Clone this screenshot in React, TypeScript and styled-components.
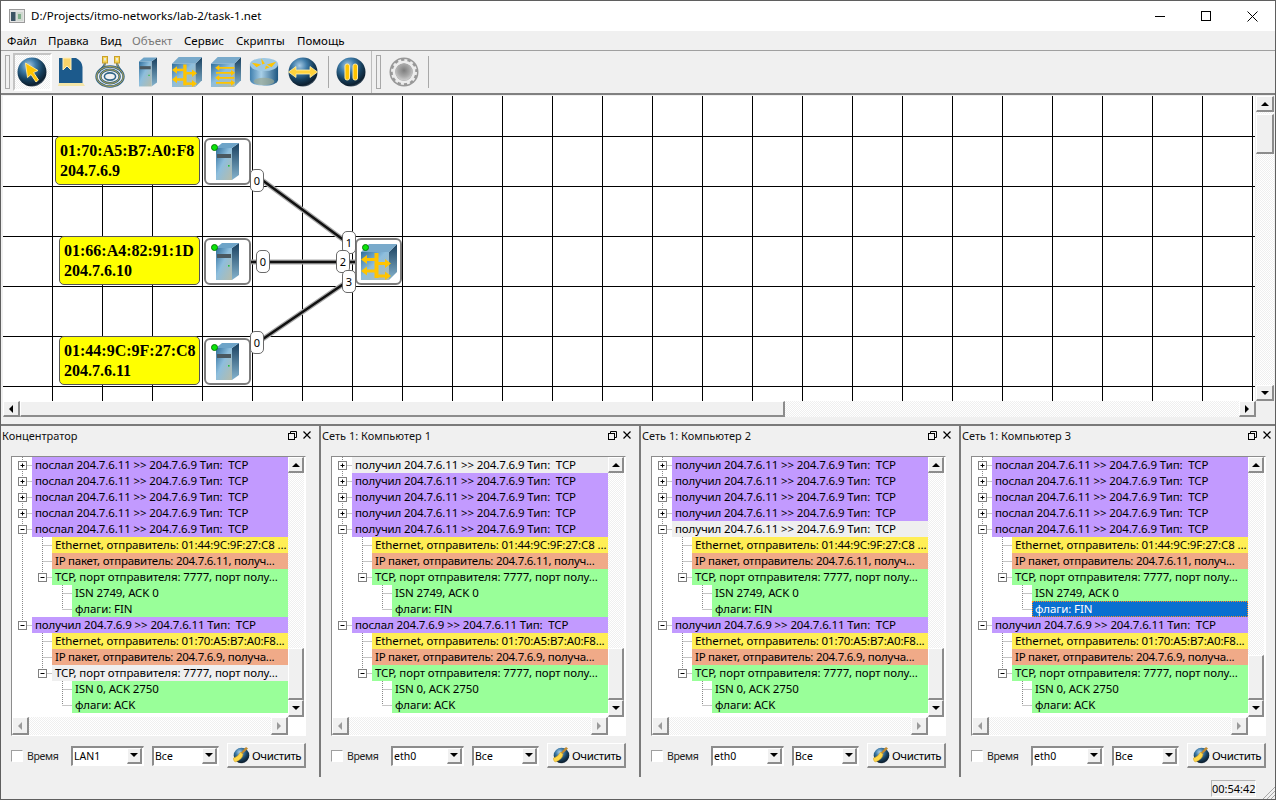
import React from 'react';
import styled, { createGlobalStyle, css } from 'styled-components';

const Global = createGlobalStyle`
  html, body { margin: 0; padding: 0; background: #f0f0f0; }
  * { box-sizing: border-box; }
`;

const uiFont = `"Noto Sans", "Open Sans", sans-serif`;
const checker = css`
  background: repeating-conic-gradient(#ffffff 0 25%, #efefef 0 50%) 0 0 / 2px 2px;
`;
const raised = css`
  background: #f0f0f0;
  border-style: solid;
  border-width: 1px 2px 2px 1px;
  border-color: #ffffff #8c8c8c #8c8c8c #ffffff;
`;
const sunken = css`
  border-style: solid;
  border-width: 2px 1px 1px 2px;
  border-color: #8c8c8c #ffffff #ffffff #8c8c8c;
`;

const Win = styled.div`
  width: 1276px;
  height: 800px;
  border: 1px solid #5f5f5f;
  background: #f0f0f0;
  display: flex;
  flex-direction: column;
  overflow: hidden;
  font-family: ${uiFont};
  font-size: 12px;
  color: #000;
`;
const TitleBar = styled.div`
  height: 30px;
  flex: none;
  background: #fff;
  display: flex;
  align-items: center;
  padding-left: 8px;
  gap: 6px;
`;
const TitleText = styled.span`
  flex: 1;
  font-size: 11.5px;
  padding-bottom: 2px;
`;
const WinButtons = styled.div`
  display: flex;
  align-items: center;
  height: 100%;
`;
const WinButton = styled.div`
  width: 46px;
  height: 100%;
  display: flex;
  align-items: center;
  justify-content: center;
`;
const MenuBar = styled.div`
  height: 20px;
  flex: none;
  display: flex;
  align-items: center;
  border-bottom: 1px solid #a0a0a0;
  font-size: 11.5px;
`;
const MenuItem = styled.span<{ $w: number; $off?: boolean }>`
  width: ${p => p.$w}px;
  padding-left: 6px;
  white-space: nowrap;
  color: ${p => (p.$off ? '#787878' : '#000')};
`;
const Toolbar = styled.div`
  height: 42px;
  flex: none;
  display: flex;
  align-items: center;
  padding-left: 4px;
`;
const Grip = styled.div`
  width: 5px;
  height: 34px;
  margin-right: 3px;
  ${raised};
  border-width: 1px;
  border-color: #a8a8a8;
`;
const ToolButton = styled.div<{ $on?: boolean }>`
  width: 38.7px;
  height: 38px;
  flex: none;
  display: flex;
  align-items: center;
  justify-content: center;
  ${p => p.$on && css`
    ${checker};
    border: 2px solid #c4c4c4;
    border-right-color: #fff;
    border-bottom-color: #fff;
  `}
`;
const ToolSep = styled.div`
  width: 1px;
  height: 32px;
  background: #a8a8a8;
  margin: 0 3px 0 5px;
  flex: none;
`;
const ToolEnd = styled.div`
  width: 1px;
  height: 42px;
  background: #bdbdbd;
  margin: 0 4px 0 1px;
  flex: none;
`;
const CanvasRow = styled.div`
  height: 308px;
  flex: none;
  display: flex;
  border-top: 2px solid #808080;
  padding-left: 2px;
`;
const Canvas = styled.div`
  position: relative;
  width: 1252px;
  height: 305px;
  margin-top: 1px;
  background-color: #fff;
  background-image:
    linear-gradient(to right, #000 1px, transparent 1px),
    linear-gradient(to bottom, #000 1px, transparent 1px);
  background-size: 50px 50px;
  background-position: 49px 40px;
  overflow: hidden;
`;
const Wires = styled.svg`
  position: absolute;
  left: 0;
  top: 0;
`;
const NodeLabel = styled.div<{ $x: number; $y: number; $w: number }>`
  position: absolute;
  left: ${p => p.$x}px;
  top: ${p => p.$y}px;
  width: ${p => p.$w}px;
  height: 49px;
  background: #ffff00;
  border: 1px solid #555;
  border-radius: 5px;
  font: bold 16px/20px "Liberation Serif", serif;
  padding: 4px 0 0 4px;
  white-space: pre;
`;
const NodeBox = styled.div<{ $x: number; $y: number }>`
  position: absolute;
  left: ${p => p.$x}px;
  top: ${p => p.$y}px;
  width: 47px;
  height: 47px;
  background: #fff;
  border: 2px solid #7c7c7c;
  border-radius: 6px;
  display: flex;
  align-items: center;
  justify-content: center;
`;
const Led = styled.div`
  position: absolute;
  left: 5px;
  top: 4px;
  width: 7px;
  height: 7px;
  border-radius: 50%;
  background: #0be40b;
  border: 1px solid #0a7a0a;
  z-index: 1;
`;
const Port = styled.div<{ $x: number; $y: number }>`
  position: absolute;
  left: ${p => p.$x}px;
  top: ${p => p.$y}px;
  width: 14px;
  height: 23px;
  background: #fff;
  border: 1px solid #6a6a6a;
  border-radius: 5px;
  font: 11px/21px ${uiFont};
  text-align: center;
`;
const VScroll = styled.div`
  width: 18px;
  margin-left: 1px;
  margin-top: 1px;
  height: 305px;
  display: flex;
  flex-direction: column;
  flex: none;
`;
const ScrollBtn = styled.div<{ $h?: number; $w?: number }>`
  ${raised};
  flex: none;
  width: ${p => (p.$w ? `${p.$w}px` : 'auto')};
  height: ${p => (p.$h ? `${p.$h}px` : 'auto')};
  display: flex;
  align-items: center;
  justify-content: center;
`;
const Track = styled.div`
  flex: 1;
  ${checker};
  min-width: 0;
  min-height: 0;
  display: flex;
`;
const TrackV = styled(Track)`
  flex-direction: column;
`;
const Thumb = styled.div<{ $len: number; $vertical?: boolean; $start?: number }>`
  ${raised};
  flex: none;
  ${p => p.$vertical
    ? css`height: ${p.$len}px; margin-top: ${p.$start || 0}px;`
    : css`width: ${p.$len}px;`}
`;
const Arrow = styled.div<{ $dir: 'up' | 'down' | 'left' | 'right'; $off?: boolean }>`
  width: 0;
  height: 0;
  border-style: solid;
  border-color: transparent;
  ${p => {
    const c = p.$off ? '#9a9a9a' : '#000';
    if (p.$dir === 'up') return css`border-width: 0 4px 4px 4px; border-bottom-color: ${c};`;
    if (p.$dir === 'down') return css`border-width: 4px 4px 0 4px; border-top-color: ${c};`;
    if (p.$dir === 'left') return css`border-width: 4px 4px 4px 0; border-right-color: ${c};`;
    return css`border-width: 4px 0 4px 4px; border-left-color: ${c};`;
  }}
`;
const HScrollRow = styled.div`
  height: 16px;
  flex: none;
  display: flex;
  padding-left: 2px;
  width: 1255px;
`;
const DockTop = styled.div`
  height: 9px;
  flex: none;
  border-bottom: 2px solid #7a7a7a;
`;
const Docks = styled.div`
  height: 351px;
  flex: none;
  display: flex;
`;
const Panel = styled.div<{ $last?: boolean }>`
  flex: ${p => (p.$last ? '1' : '0 0 320px')};
  min-width: 0;
  border-right: ${p => (p.$last ? 'none' : '2px solid #7a7a7a')};
  padding-left: 10px;
  display: flex;
  flex-direction: column;
`;
const PanelHead = styled.div`
  height: 18px;
  margin-left: -9px;
  margin-bottom: 12px;
  display: flex;
  align-items: center;
  flex: none;
  width: 309px;
`;
const PanelTitle = styled.span`
  flex: 1;
  font-size: 11px;
  color: #111;
`;
const PanelIcons = styled.div`
  display: flex;
  align-items: center;
  gap: 6px;
`;
const TreeBox = styled.div`
  width: 295px;
  height: 280px;
  flex: none;
  ${sunken};
  border-width: 1px;
  border-top: 1px solid #8c8c8c;
  border-left: 1px solid #8c8c8c;
  display: grid;
  grid-template-columns: 276px 16px;
  grid-template-rows: 260px 18px;
  background: #fff;
`;
const TreeList = styled.div`
  overflow: hidden;
  display: flex;
  flex-direction: column;
`;
const Row = styled.div`
  height: 16px;
  flex: none;
  display: flex;
`;
const tones = {
  purple: '#c29aff',
  yellow: '#ffee55',
  salmon: '#f0aa88',
  green: '#99ff99',
  grey: '#efefef',
  sel: '#0a6fd0',
};
const RowLabel = styled.div<{ $tone: keyof typeof tones }>`
  flex: 1;
  min-width: 0;
  height: 16px;
  background: ${p => tones[p.$tone]};
  color: ${p => (p.$tone === 'sel' ? '#fff' : '#000')};
  font-size: 11.5px;
  letter-spacing: ${p => (p.$tone === 'salmon' ? '-0.26px' : '-0.12px')};
  line-height: 16px;
  padding-left: 3px;
  white-space: pre;
  overflow: hidden;
  ${p => p.$tone === 'sel' && css`outline: 1px dotted #ff8a1e; outline-offset: -1px;`}
`;
const ListV = styled.div`
  display: flex;
  flex-direction: column;
  height: 260px;
`;
const HBar = styled.div`
  display: flex;
  grid-column: 1 / 2;
`;
const Controls = styled.div`
  margin-top: 7px;
  width: 295px;
  height: 25px;
  display: flex;
  align-items: center;
  flex: none;
`;
const Check = styled.div`
  width: 12px;
  height: 12px;
  background: #fff;
  border: 1px solid;
  border-color: #a0a0a0 #fff #fff #a0a0a0;
  flex: none;
  margin-right: 4px;
`;
const CheckLabel = styled.span`
  width: 44px;
  font-size: 10.5px;
  letter-spacing: -0.3px;
  color: #222;
  flex: none;
`;
const Combo = styled.div<{ $w: number }>`
  width: ${p => p.$w}px;
  height: 20px;
  flex: none;
  ${sunken};
  background: #fff;
  display: flex;
  align-items: center;
  margin-right: 8px;
  padding: 0 1px 1px 1px;
`;
const ComboText = styled.span`
  flex: 1;
  font-size: 10.5px;
`;
const ComboBtn = styled(ScrollBtn)`
  width: 15px;
  height: 16px;
`;
const ClearBtn = styled.div`
  ${raised};
  width: 79px;
  height: 25px;
  flex: none;
  display: flex;
  align-items: center;
  padding-left: 4px;
  gap: 2px;
  font-size: 11.5px;
  letter-spacing: -0.4px;
`;
const Status = styled.div`
  flex: 1;
  display: flex;
  justify-content: flex-end;
  padding: 3px 1px 0 0;
  position: relative;
`;
const Clock = styled.div`
  width: 45px;
  height: 17px;
  margin-right: 18px;
  border: 1px solid #b5b5b5;
  border-right-color: #fff;
  border-bottom-color: #fff;
  font-size: 11px;
  line-height: 15px;
  text-align: center;
`;
const GripCorner = styled.svg`
  position: absolute;
  right: 0;
  bottom: 0;
`;

const Defs = () => (
  <svg width="0" height="0" style={{ position: 'absolute' }}>
    <defs>
      <radialGradient id="ball" cx="38%" cy="28%" r="78%">
        <stop offset="0" stopColor="#a8cbe4" />
        <stop offset="0.32" stopColor="#3f7ca9" />
        <stop offset="0.62" stopColor="#17415f" />
        <stop offset="0.88" stopColor="#0d1f2f" />
        <stop offset="1" stopColor="#6b7d8c" />
      </radialGradient>
      <radialGradient id="grey" cx="50%" cy="40%" r="60%">
        <stop offset="0" stopColor="#7d7d7d" />
        <stop offset="0.6" stopColor="#a8a8a8" />
        <stop offset="1" stopColor="#d0d0d0" />
      </radialGradient>
      <linearGradient id="front" x1="0" y1="0" x2="1" y2="1">
        <stop offset="0" stopColor="#2f6e9c" />
        <stop offset="0.45" stopColor="#8dbedd" />
        <stop offset="1" stopColor="#b6bcaa" />
      </linearGradient>
      <linearGradient id="side" x1="0" y1="0" x2="0" y2="1">
        <stop offset="0" stopColor="#183f5e" />
        <stop offset="1" stopColor="#86b4ce" />
      </linearGradient>
      <linearGradient id="cyl" x1="0" y1="0" x2="1" y2="0">
        <stop offset="0" stopColor="#3f7fae" />
        <stop offset="0.4" stopColor="#a9d0e8" />
        <stop offset="1" stopColor="#1e5680" />
      </linearGradient>
    </defs>
  </svg>
);

const Y = '#ffc400';

const Ball: React.FC<{ children?: React.ReactNode }> = ({ children }) => (
  <svg width="32" height="32" viewBox="0 0 32 32">
    <circle cx="16" cy="16" r="14.5" fill="url(#ball)" />
    {children}
  </svg>
);
const Pointer = () => (
  <Ball>
    <path d="M9.5 7 L22 14.5 L17.5 16.5 L22.5 24 L20 26 L15 18.5 L11.5 21.5 Z" fill={Y} stroke="#ffe590" strokeWidth="1" />
  </Ball>
);
const Doc = () => (
  <svg width="32" height="32" viewBox="0 0 32 32">
    <path d="M3 30 L30 30 L28 27 L4 27 Z" fill="#f5e6a8" />
    <path d="M4 2 L21 2 Q27 5 27.5 11 L27.5 27 L4 27 Z" fill="#1c5a8c" />
    <path d="M8 2 L16 2 L16 14 L12 10 L8 14 Z" fill="#f9d36a" stroke="#fff0c0" strokeWidth="1" />
  </svg>
);
const Cable = () => (
  <svg width="32" height="32" viewBox="0 0 32 32" fill="none">
    <path d="M11 7 C11 11 7 12 4 17 M23 7 C23 11 26 12 28 17" stroke="#34668a" strokeWidth="2.2" />
    <path d="M11 7 C11 11 7 12 4 17 M23 7 C23 11 26 12 28 17" stroke="#d9b13a" strokeWidth="0.8" />
    <rect x="8.5" y="0.5" width="5" height="6.5" fill="#f6d658" stroke="#c8a02c" />
    <rect x="20.5" y="0.5" width="5" height="6.5" fill="#f6d658" stroke="#c8a02c" />
    <rect x="10" y="2" width="2" height="2.5" fill="#e9e9e0" />
    <rect x="22" y="2" width="2" height="2.5" fill="#e9e9e0" />
    <ellipse cx="16" cy="20.5" rx="13.5" ry="10" stroke="#2f6488" strokeWidth="2.4" />
    <ellipse cx="16" cy="20.5" rx="13.5" ry="10" stroke="#d4b03c" strokeWidth="0.8" />
    <ellipse cx="16" cy="20.5" rx="9.6" ry="6.8" stroke="#2f6488" strokeWidth="2.4" />
    <ellipse cx="16" cy="20.5" rx="9.6" ry="6.8" stroke="#d4b03c" strokeWidth="0.8" />
    <ellipse cx="16" cy="20.5" rx="5.6" ry="3.6" stroke="#2f6488" strokeWidth="1.6" />
  </svg>
);
const Server: React.FC<{ w?: number; h?: number }> = ({ w = 18, h = 30 }) => (
  <svg width={w} height={h} viewBox="0 0 23 37">
    <path d="M16 5 L23 0 L23 32 L16 37 Z" fill="url(#side)" />
    <rect x="0" y="5" width="16" height="32" fill="url(#front)" />
    <path d="M0 5 L6 0 L23 0 L16 5 Z" fill="#6ea4c8" />
    <rect x="1" y="11" width="14" height="4" fill="#4a5860" />
    <rect x="12" y="22" width="1.6" height="1.6" fill="#22c03a" />
  </svg>
);
const Cube: React.FC<{ children?: React.ReactNode; s?: number }> = ({ children, s = 30 }) => (
  <svg width={s} height={s} viewBox="0 0 36 36">
    <path d="M28 36 L36 28 V0 L28 8 Z" fill="url(#side)" />
    <rect x="0" y="8" width="28" height="28" fill="url(#front)" />
    <path d="M0 8 L8 0 H36 L28 8 Z" fill="#79aacb" />
    {children}
  </svg>
);
const HubArrows = () => (
  <g fill={Y}>
    <rect x="13.5" y="9" width="4" height="25" />
    <rect x="5" y="14" width="9" height="3" />
    <path d="M0 15.5 L6 11 V20 Z" />
    <rect x="5" y="25.5" width="9" height="3" />
    <path d="M0 27 L6 22.5 V31.5 Z" />
    <rect x="17" y="18" width="8" height="3" />
    <path d="M30 19.5 L24 15 V24 Z" />
    <rect x="17" y="30.5" width="8" height="3" />
    <path d="M30 32 L24 27.5 V36 Z" />
  </g>
);
const SwitchArrows = () => (
  <g fill={Y}>
    <path d="M5 13 L10 9.5 V12 H28 V14 H10 V16.5 Z" />
    <path d="M29 19 L24 15.5 V18 H6 V20 H24 V22.5 Z" />
    <path d="M5 25 L10 21.5 V24 H28 V26 H10 V28.5 Z" />
    <path d="M29 31 L24 27.5 V30 H6 V32 H24 V34.5 Z" />
  </g>
);
const Router = () => (
  <svg width="30" height="30" viewBox="0 0 32 32">
    <path d="M1 8 V24 C1 33 31 33 31 24 V8 Z" fill="url(#cyl)" />
    <ellipse cx="16" cy="26" rx="11" ry="4" fill="#9aa894" opacity="0.7" />
    <ellipse cx="16" cy="8" rx="15" ry="7" fill="#9fc8e2" />
    <path d="M3 6 L13 8 L8 11 Z M29 5 L19 8 L24 11 Z M13 1.5 L17 7 L14 8 Z M17 13 L18 9 L22 11 Z" fill={Y} />
  </svg>
);
const Swap = () => (
  <Ball>
    <path d="M1.5 16 L9 10.5 V14 H23 V10.5 L30.5 16 L23 21.5 V18 H9 V21.5 Z" fill="#ffd23c" stroke="#fff0b0" strokeWidth="0.8" />
  </Ball>
);
const Pause = () => (
  <Ball>
    <rect x="10" y="8" width="4.5" height="16" rx="2" fill={Y} stroke="#ffe9a0" />
    <rect x="18" y="8" width="4.5" height="16" rx="2" fill={Y} stroke="#ffe9a0" />
  </Ball>
);
const Gear = () => (
  <svg width="32" height="32" viewBox="0 0 32 32">
    <circle cx="16" cy="16" r="14.5" fill="#989898" />
    <circle cx="16" cy="16" r="10" fill="none" stroke="#ededed" strokeWidth="2.6" />
    <circle cx="16" cy="16" r="11.8" fill="none" stroke="#ededed" strokeWidth="2.4" strokeDasharray="3 3.18" />
    <circle cx="16" cy="16" r="8.6" fill="url(#grey)" />
  </svg>
);
const Broom = () => (
  <svg width="18" height="18" viewBox="0 0 18 18">
    <circle cx="9.5" cy="9.5" r="7.8" fill="url(#ball)" />
    <path d="M14 1 L16 2.5 L10.5 8 L9 6.5 Z" fill="#c08a30" />
    <path d="M8.5 6 L11 8.5 Q10 14 3 16 Q1 14 1.5 12 Q6 11 8.5 6 Z" fill="#ffd84a" stroke="#d0a020" strokeWidth="0.5" />
  </svg>
);
const AppIcon = () => (
  <svg width="16" height="14" viewBox="0 0 16 14">
    <rect x="0.5" y="0.5" width="15" height="13" fill="#e4e4e4" stroke="#9a9a9a" />
    <rect x="2" y="3" width="4.5" height="9" fill="#3d5565" />
    <rect x="7.5" y="3" width="6.5" height="9" fill="#cfd8d0" />
    <rect x="9" y="5" width="3" height="5" fill="#7fae8a" />
  </svg>
);
const Restore = () => (
  <svg width="9" height="9" viewBox="0 0 9 9" fill="none" stroke="#000">
    <rect x="0.5" y="2.5" width="6" height="6" />
    <path d="M2.5 2.5 V0.5 H8.5 V6.5 H6.5" />
  </svg>
);
const CloseX = () => (
  <svg width="8" height="8" viewBox="0 0 8 8" stroke="#000" strokeWidth="1.2">
    <path d="M0.5 0.5 L7.5 7.5 M7.5 0.5 L0.5 7.5" />
  </svg>
);

type Line = {
  text: string;
  level: 0 | 1 | 2;
  tone: keyof typeof tones;
  exp?: 'plus' | 'minus';
  rails: number[];
  half?: boolean;
};

const Gutter: React.FC<{ line: Line }> = ({ line }) => {
  const w = 20 + line.level * 20;
  const railX = (n: number) => 10.5 + n * 20;
  const x = railX(line.level);
  return (
    <svg width={w} height={16} style={{ flex: 'none', display: 'block' }}>
      <g stroke="#8a8a8a" strokeDasharray="1 1" fill="none">
        {line.rails.map(r => <path key={r} d={`M${railX(r)} 0 V16`} />)}
        {line.half && <path d={`M${x} 0 V8`} />}
        <path d={`M${x} 8.5 H${w}`} />
      </g>
      {line.exp && (
        <g>
          <rect x={x - 4} y={4.5} width={8} height={8} fill="#fff" stroke="#808080" />
          <path d={`M${x - 2} 8.5 H${x + 2}`} stroke="#000" />
          {line.exp === 'plus' && <path d={`M${x} 6.5 V10.5`} stroke="#000" />}
        </g>
      )}
    </svg>
  );
};

type Spec = {
  verb1: string;
  verb2: string;
  topGrey?: number;
  tcp2Grey?: boolean;
  finSel?: boolean;
  thumbStart: number;
};

const buildLines = (s: Spec): Line[] => {
  const a = `${s.verb1} 204.7.6.11 >> 204.7.6.9 Тип:  TCP`;
  const out: Line[] = [];
  for (let i = 0; i < 5; i++) {
    out.push({
      text: a,
      level: 0,
      tone: s.topGrey === i ? 'grey' : 'purple',
      exp: i === 4 ? 'minus' : 'plus',
      rails: [0],
    });
  }
  out.push({ text: 'Ethernet, отправитель: 01:44:9C:9F:27:C8 ...', level: 1, tone: 'yellow', rails: [0, 1] });
  out.push({ text: 'IP пакет, отправитель: 204.7.6.11, получ...', level: 1, tone: 'salmon', rails: [0, 1] });
  out.push({ text: 'TCP, порт отправителя: 7777, порт полу...', level: 1, tone: 'green', rails: [0], half: true, exp: 'minus' });
  out.push({ text: 'ISN 2749, ACK 0', level: 2, tone: 'green', rails: [0, 2] });
  out.push({ text: 'флаги: FIN', level: 2, tone: s.finSel ? 'sel' : 'green', rails: [0], half: true });
  out.push({ text: `${s.verb2} 204.7.6.9 >> 204.7.6.11 Тип:  TCP`, level: 0, tone: 'purple', exp: 'minus', rails: [], half: true });
  out.push({ text: 'Ethernet, отправитель: 01:70:A5:B7:A0:F8...', level: 1, tone: 'yellow', rails: [1] });
  out.push({ text: 'IP пакет, отправитель: 204.7.6.9, получа...', level: 1, tone: 'salmon', rails: [1] });
  out.push({ text: 'TCP, порт отправителя: 7777, порт полу...', level: 1, tone: s.tcp2Grey ? 'grey' : 'green', rails: [], half: true, exp: 'minus' });
  out.push({ text: 'ISN 0, ACK 2750', level: 2, tone: 'green', rails: [2] });
  out.push({ text: 'флаги: ACK', level: 2, tone: 'green', rails: [], half: true });
  return out;
};

const panels: { title: string; iface: string; spec: Spec }[] = [
  { title: 'Концентратор', iface: 'LAN1', spec: { verb1: 'послал', verb2: 'получил', tcp2Grey: true, thumbStart: 175 } },
  { title: 'Сеть 1: Компьютер 1', iface: 'eth0', spec: { verb1: 'получил', verb2: 'послал', topGrey: 0, thumbStart: 175 } },
  { title: 'Сеть 1: Компьютер 2', iface: 'eth0', spec: { verb1: 'получил', verb2: 'получил', topGrey: 4, thumbStart: 175 } },
  { title: 'Сеть 1: Компьютер 3', iface: 'eth0', spec: { verb1: 'послал', verb2: 'получил', finSel: true, thumbStart: 182 } },
];

const DockPanel: React.FC<{ title: string; iface: string; spec: Spec; last?: boolean }> = ({ title, iface, spec, last }) => (
  <Panel $last={last}>
    <PanelHead>
      <PanelTitle>{title}</PanelTitle>
      <PanelIcons><Restore /><CloseX /></PanelIcons>
    </PanelHead>
    <TreeBox>
      <TreeList>
        {buildLines(spec).map((l, i) => (
          <Row key={i}>
            <Gutter line={l} />
            <RowLabel $tone={l.tone}>{l.text}</RowLabel>
          </Row>
        ))}
      </TreeList>
      <ListV>
        <ScrollBtn $h={16}><Arrow $dir="up" /></ScrollBtn>
        <TrackV>
          <Thumb $vertical $len={227 - spec.thumbStart} $start={spec.thumbStart} />
        </TrackV>
        <ScrollBtn $h={17}><Arrow $dir="down" /></ScrollBtn>
      </ListV>
      <HBar>
        <ScrollBtn $w={17}><Arrow $dir="left" $off /></ScrollBtn>
        <Track />
        <ScrollBtn $w={17}><Arrow $dir="right" $off /></ScrollBtn>
      </HBar>
    </TreeBox>
    <Controls>
      <Check />
      <CheckLabel>Время</CheckLabel>
      <Combo $w={73}><ComboText>{iface}</ComboText><ComboBtn><Arrow $dir="down" /></ComboBtn></Combo>
      <Combo $w={67}><ComboText>Все</ComboText><ComboBtn><Arrow $dir="down" /></ComboBtn></Combo>
      <ClearBtn><Broom />Очистить</ClearBtn>
    </Controls>
  </Panel>
);

export default function App() {
  return (
    <Win>
      <Global />
      <Defs />
      <TitleBar>
        <AppIcon />
        <TitleText>D:/Projects/itmo-networks/lab-2/task-1.net</TitleText>
        <WinButtons>
          <WinButton>
            <svg width="10" height="10" viewBox="0 0 10 10" stroke="#000"><path d="M0 5.5 H10" /></svg>
          </WinButton>
          <WinButton>
            <svg width="10" height="10" viewBox="0 0 10 10" fill="none" stroke="#000"><rect x="0.5" y="0.5" width="9" height="9" /></svg>
          </WinButton>
          <WinButton>
            <svg width="11" height="11" viewBox="0 0 11 11" stroke="#000"><path d="M0.5 0.5 L10.5 10.5 M10.5 0.5 L0.5 10.5" /></svg>
          </WinButton>
        </WinButtons>
      </TitleBar>
      <MenuBar>
        <MenuItem $w={41}>Файл</MenuItem>
        <MenuItem $w={52}>Правка</MenuItem>
        <MenuItem $w={32}>Вид</MenuItem>
        <MenuItem $w={52} $off>Объект</MenuItem>
        <MenuItem $w={52}>Сервис</MenuItem>
        <MenuItem $w={61}>Скрипты</MenuItem>
        <MenuItem $w={60}>Помощь</MenuItem>
      </MenuBar>
      <Toolbar>
        <Grip />
        <ToolButton $on><Pointer /></ToolButton>
        <ToolButton><Doc /></ToolButton>
        <ToolButton><Cable /></ToolButton>
        <ToolButton><Server /></ToolButton>
        <ToolButton><Cube><HubArrows /></Cube></ToolButton>
        <ToolButton><Cube><SwitchArrows /></Cube></ToolButton>
        <ToolButton><Router /></ToolButton>
        <ToolButton><Swap /></ToolButton>
        <ToolSep />
        <ToolButton><Pause /></ToolButton>
        <ToolEnd />
        <Grip />
        <ToolButton><Gear /></ToolButton>
        <ToolSep />
      </Toolbar>
      <CanvasRow>
        <Canvas>
          <Wires width="1252" height="305">
            <g fill="none" strokeLinecap="round">
              <g stroke="#a8a8a8" strokeWidth="5">
                <path d="M255 81 L342 145" />
                <path d="M225 166 L375 166" />
                <path d="M254 247 L342 187" />
              </g>
              <g stroke="#111" strokeWidth="2.5">
                <path d="M255 81 L342 145" />
                <path d="M225 166 L375 166" />
                <path d="M254 247 L342 187" />
              </g>
            </g>
          </Wires>
          <NodeLabel $x={52} $y={40} $w={145}>01:70:A5:B7:A0:F8{'\n'}204.7.6.9</NodeLabel>
          <NodeLabel $x={56} $y={140} $w={141}>01:66:A4:82:91:1D{'\n'}204.7.6.10</NodeLabel>
          <NodeLabel $x={56} $y={240} $w={141}>01:44:9C:9F:27:C8{'\n'}204.7.6.11</NodeLabel>
          <NodeBox $x={201} $y={42}><Led /><Server w={23} h={37} /></NodeBox>
          <NodeBox $x={201} $y={142}><Led /><Server w={23} h={37} /></NodeBox>
          <NodeBox $x={201} $y={242}><Led /><Server w={23} h={37} /></NodeBox>
          <NodeBox $x={352} $y={142}><Led /><Cube s={36}><HubArrows /></Cube></NodeBox>
          <Port $x={247} $y={73}>0</Port>
          <Port $x={253} $y={154}>0</Port>
          <Port $x={247} $y={235}>0</Port>
          <Port $x={339} $y={135}>1</Port>
          <Port $x={333} $y={154}>2</Port>
          <Port $x={339} $y={174}>3</Port>
        </Canvas>
        <VScroll>
          <ScrollBtn $h={16}><Arrow $dir="up" /></ScrollBtn>
          <TrackV>
            <Thumb $vertical $len={40} $start={2} />
          </TrackV>
          <ScrollBtn $h={16}><Arrow $dir="down" /></ScrollBtn>
        </VScroll>
      </CanvasRow>
      <HScrollRow>
        <ScrollBtn $w={17}><Arrow $dir="left" /></ScrollBtn>
        <Track>
          <Thumb $len={765} />
        </Track>
        <ScrollBtn $w={17}><Arrow $dir="right" /></ScrollBtn>
      </HScrollRow>
      <DockTop />
      <Docks>
        {panels.map((p, i) => (
          <DockPanel key={p.title} {...p} last={i === 3} />
        ))}
      </Docks>
      <Status>
        <Clock>00:54:42</Clock>
        <GripCorner width="14" height="14" viewBox="0 0 14 14" stroke="#a8a8a8">
          <path d="M14 2 L2 14 M14 6 L6 14 M14 10 L10 14" />
        </GripCorner>
      </Status>
    </Win>
  );
}
